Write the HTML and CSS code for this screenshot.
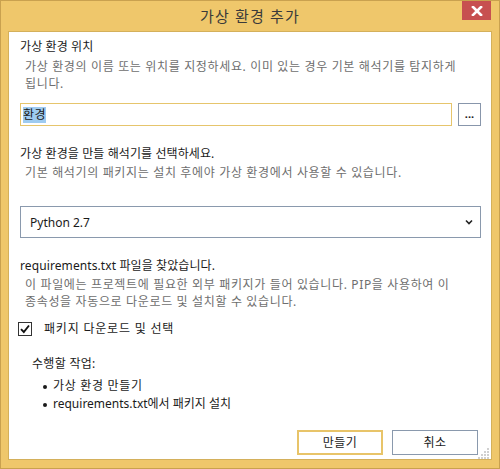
FILE: index.html
```html
<!DOCTYPE html>
<html lang="ko">
<head>
<meta charset="utf-8">
<title>가상 환경 추가</title>
<link rel="stylesheet" href="styles.css">
</head>
<body>
<div class="window">
  <div class="titlebar">
    <span class="title">가상 환경 추가</span>
    <div class="close">
      <svg width="12" height="10" viewBox="0 0 12 10"><path d="M2 1 L10 9 M10 1 L2 9" stroke="#fff" stroke-width="2.6" stroke-linecap="square"/></svg>
    </div>
  </div>
  <div class="client">
    <div class="heading first">가상 환경 위치</div>
    <div class="desc">가상 환경의 이름 또는 위치를 지정하세요. 이미 있는 경우 기본 해석기를 탐지하게<br>됩니다.</div>
    <div class="input-row">
      <div class="input"><span class="sel">환경</span></div>
      <div class="browse">...</div>
    </div>
    <div class="heading sec">가상 환경을 만들 해석기를 선택하세요.</div>
    <div class="desc">기본 해석기의 패키지는 설치 후에야 가상 환경에서 사용할 수 있습니다.</div>
    <div class="select">
      <span>Python 2.7</span>
      <svg width="8" height="6" viewBox="0 0 8 6"><path d="M1 1.5 L4 4.5 L7 1.5" fill="none" stroke="#222" stroke-width="1.6"/></svg>
    </div>
    <div class="heading sec">requirements.txt 파일을 찾았습니다.</div>
    <div class="desc">이 파일에는 프로젝트에 필요한 외부 패키지가 들어 있습니다. PIP을 사용하여 이<br>종속성을 자동으로 다운로드 및 설치할 수 있습니다.</div>
    <div class="check-row">
      <div class="checkbox">
        <svg width="12" height="12" viewBox="0 0 12 12"><path d="M2 6.2 L4.8 9 L10 2.5" fill="none" stroke="#111" stroke-width="1.9"/></svg>
      </div>
      <span class="check-label">패키지 다운로드 및 선택</span>
    </div>
    <div class="tasks-title">수행할 작업:</div>
    <ul class="tasks">
      <li class="ko">가상 환경 만들기</li>
      <li>requirements.txt에서 패키지 설치</li>
    </ul>
    <div class="buttons">
      <div class="btn default">만들기</div>
      <div class="btn">취소</div>
    </div>
    <div class="grip">
      <svg width="12" height="12" viewBox="0 0 12 12" fill="#d0d0d0">
        <rect x="9" y="0" width="2" height="2"/>
        <rect x="6" y="3" width="2" height="2"/><rect x="9" y="3" width="2" height="2"/>
        <rect x="3" y="6" width="2" height="2"/><rect x="6" y="6" width="2" height="2"/><rect x="9" y="6" width="2" height="2"/>
        <rect x="0" y="9" width="2" height="2"/><rect x="3" y="9" width="2" height="2"/><rect x="6" y="9" width="2" height="2"/><rect x="9" y="9" width="2" height="2"/>
      </svg>
    </div>
  </div>
</div>
</body>
</html>
```
FILE: styles.css
```css
html, body {
  margin: 0;
  padding: 0;
}
body {
  font-family: "Noto Sans", "Noto Sans CJK KR", sans-serif;
  font-size: 12px;
  color: #1a1a1a;
}
.window {
  width: 500px;
  height: 469px;
  box-sizing: border-box;
  background: #efc76b;
  border: 1px solid #c9a14f;
  display: flex;
  flex-direction: column;
}
.titlebar {
  height: 30px;
  position: relative;
  display: flex;
  align-items: center;
  justify-content: center;
}
.title {
  font-size: 15px;
  color: #3a3a3a;
  line-height: 20px;
  margin-top: -1px;
  letter-spacing: 1.2px;
}
.close {
  position: absolute;
  right: 8px;
  top: 0;
  width: 29px;
  height: 19px;
  background: #c75050;
  display: flex;
  align-items: center;
  justify-content: center;
}
.client {
  position: relative;
  flex: 1;
  margin: 0 7px 8px 7px;
  background: #fff;
  border: 1px solid #d4b05b;
  padding: 0 10px 0 11px;
  display: flex;
  flex-direction: column;
}
.heading {
  line-height: 16px;
  color: #1a1a1a;
  letter-spacing: 0.1px;
}
.heading.first {
  margin-top: 7px;
}
.heading.sec {
  margin-top: 20px;
}
.desc {
  color: #6e6e6e;
  line-height: 17px;
  padding-left: 5px;
  margin-top: 2px;
  letter-spacing: 0.65px;
}
.heading.first + .desc {
  margin-top: 3px;
}
.input-row {
  display: flex;
  gap: 6px;
  margin-top: 11px;
  height: 23px;
}
.input {
  flex: 1;
  box-sizing: border-box;
  border: 1px solid #e6c56c;
  display: flex;
  align-items: center;
  padding-left: 2px;
}
.sel {
  background: #9ecbf0;
  line-height: 16px;
  color: #1a1a1a;
  letter-spacing: 0.5px;
}
.browse {
  width: 23px;
  box-sizing: border-box;
  border: 1px solid #8896ab;
  display: flex;
  align-items: center;
  justify-content: center;
  font-weight: bold;
  font-size: 11px;
  line-height: 10px;
  padding-bottom: 2px;
}
.select {
  margin-top: 25px;
  height: 32px;
  box-sizing: border-box;
  border: 1px solid #8a99ad;
  display: flex;
  align-items: center;
  justify-content: space-between;
  padding: 0 7px 0 9px;
}
.check-row {
  display: flex;
  align-items: center;
  margin-top: 12px;
  margin-left: -2px;
  height: 14px;
}
.checkbox {
  width: 14px;
  height: 14px;
  box-sizing: border-box;
  border: 1px solid #333;
  display: flex;
  align-items: center;
  justify-content: center;
}
.check-label {
  margin-left: 12px;
  line-height: 16px;
  letter-spacing: 0.8px;
}
.tasks-title {
  margin-top: 20px;
  padding-left: 12px;
  line-height: 16px;
  letter-spacing: 0.3px;
}
.tasks {
  list-style: none;
  margin: 5px 0 0 0;
  padding: 0 0 0 23px;
}
.tasks li {
  line-height: 18px;
  position: relative;
  padding-left: 10px;
}
.tasks li.ko {
  letter-spacing: 0.7px;
}
.tasks li::before {
  content: "";
  position: absolute;
  left: 0;
  top: 8px;
  width: 4px;
  height: 4px;
  border-radius: 50%;
  background: #1a1a1a;
}
.buttons {
  margin-top: auto;
  margin-bottom: 4px;
  margin-right: 3px;
  display: flex;
  justify-content: flex-end;
  gap: 9px;
}
.btn {
  width: 86px;
  height: 25px;
  box-sizing: border-box;
  border: 1px solid #8a99ad;
  display: flex;
  align-items: center;
  justify-content: center;
  line-height: 16px;
  letter-spacing: 0.5px;
}
.btn.default {
  border: 2px solid #e8c469;
}
.grip {
  position: absolute;
  right: 1px;
  bottom: 0px;
  width: 12px;
  height: 12px;
}
```
